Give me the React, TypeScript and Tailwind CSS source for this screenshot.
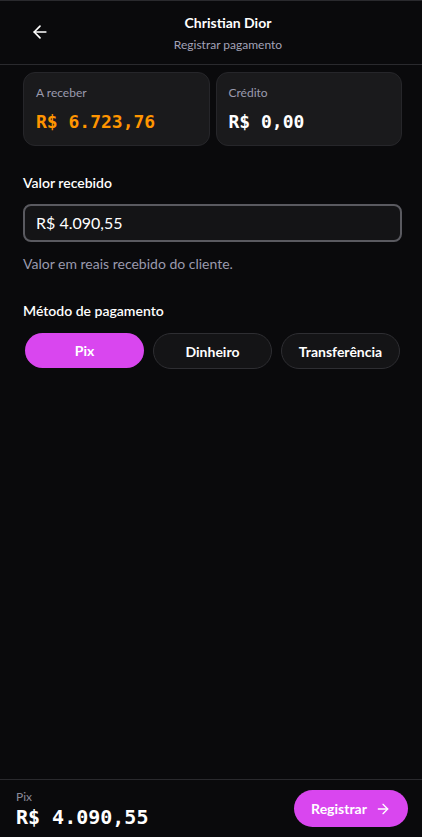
import { ArrowLeft, ArrowRight } from "lucide-react";

const mono = { fontFamily: '"DejaVu Sans Mono", "Liberation Mono", monospace' };

export default function App() {
  const methods = ["Pix", "Dinheiro", "Transferência"];
  const selected = "Pix";

  return (
    <div
      className="h-screen w-full flex flex-col bg-[#0a0a0c] text-white"
      style={{ fontFamily: 'Lato, "Noto Sans", sans-serif' }}
    >
      {/* Header */}
      <header className="relative h-[65px] shrink-0 border-t border-b border-[#2a2a2e] flex flex-col items-center justify-center pl-[34px]">
        <button className="absolute left-[30px] top-[21px] text-white">
          <ArrowLeft size={20} strokeWidth={2} />
        </button>
        <h1 className="text-[14px] font-bold leading-5 mt-[0px]">Christian Dior</h1>
        <p className="text-[12px] text-[#a3a3b8] leading-4 mt-[4px]">Registrar pagamento</p>
      </header>

      {/* Content */}
      <main className="flex-1 pl-[23px] pr-[20px] pt-[7px]">
        <div className="grid grid-cols-2 gap-[6px]">
          <div className="h-[74px] rounded-[12px] bg-[#1a1a1c] border border-[#26262a] px-[12px] pt-[12px]">
            <p className="text-[12px] text-[#9a9aae] leading-4">A receber</p>
            <p className="text-[18px] font-bold text-[#ff9500] leading-6 mt-[9px]" style={mono}>
              R$ 6.723,76
            </p>
          </div>
          <div className="h-[74px] rounded-[12px] bg-[#1a1a1c] border border-[#26262a] px-[12px] pt-[12px]">
            <p className="text-[12px] text-[#9a9aae] leading-4">Crédito</p>
            <p className="text-[18px] font-bold text-white leading-6 mt-[9px]" style={mono}>
              R$ 0,00
            </p>
          </div>
        </div>

        <label className="block text-[14px] font-semibold mt-[27px] leading-5">Valor recebido</label>
        <div className="mt-[11px] h-[38px] rounded-[8px] border-2 border-[#5a5a60] bg-[#141416] flex items-center px-[11px]">
          <span className="text-[16px] text-white">R$ 4.090,55</span>
        </div>
        <p className="text-[14px] text-[#9a9aae] mt-[12px] leading-5">Valor em reais recebido do cliente.</p>

        <p className="text-[14px] font-semibold mt-[27px] leading-5">Método de pagamento</p>
        <div className="mt-[12px] grid grid-cols-3 gap-[9px] px-[2px]">
          {methods.map((m) =>
            m === selected ? (
              <button
                key={m}
                className="h-[35px] rounded-full bg-[#d946ef] text-white text-[14px] font-bold"
              >
                {m}
              </button>
            ) : (
              <button
                key={m}
                className="h-[36px] rounded-full bg-[#141416] border border-[#2e2e32] text-white text-[14px] font-bold"
              >
                {m}
              </button>
            )
          )}
        </div>
      </main>

      {/* Footer */}
      <footer className="shrink-0 h-[58px] border-t border-[#2a2a2e] flex items-center justify-between pl-[16px] pr-[14px]">
        <div className="flex flex-col">
          <span className="text-[12px] text-[#8a8a9a] leading-4">Pix</span>
          <span className="text-[20px] font-bold text-white leading-6" style={mono}>
            R$ 4.090,55
          </span>
        </div>
        <button className="h-[37px] w-[114px] rounded-full bg-[#d946ef] text-white text-[14px] font-bold flex items-center justify-center gap-[8px]">
          Registrar
          <ArrowRight size={16} strokeWidth={2} />
        </button>
      </footer>
    </div>
  );
}
